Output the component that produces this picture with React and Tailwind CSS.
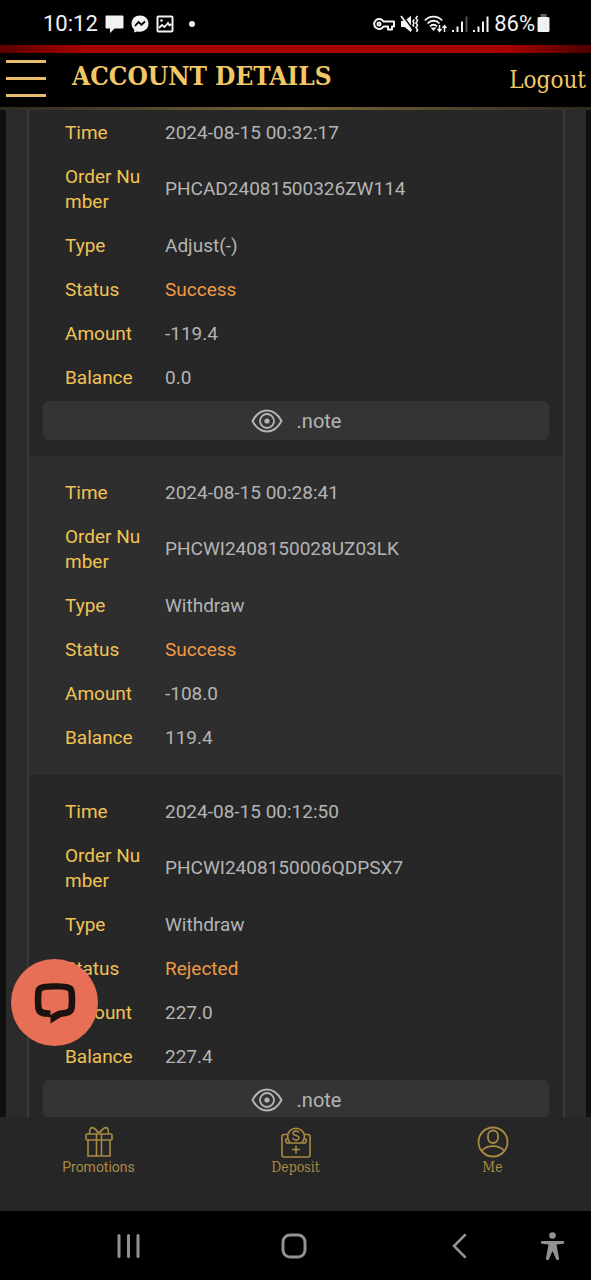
// src/App.jsx
import React from "react";

const records = [
  {
    time: "2024-08-15 00:32:17",
    orderNumber: "PHCAD24081500326ZW114",
    type: "Adjust(-)",
    status: "Success",
    amount: "-119.4",
    balance: "0.0",
    note: true,
  },
  {
    time: "2024-08-15 00:28:41",
    orderNumber: "PHCWI2408150028UZ03LK",
    type: "Withdraw",
    status: "Success",
    amount: "-108.0",
    balance: "119.4",
    note: false,
  },
  {
    time: "2024-08-15 00:12:50",
    orderNumber: "PHCWI2408150006QDPSX7",
    type: "Withdraw",
    status: "Rejected",
    amount: "227.0",
    balance: "227.4",
    note: true,
  },
];

function StatusBar() {
  return (
    <div className="flex h-[45px] shrink-0 items-center justify-between bg-black pr-[41px] pl-[43px] pt-[2px] text-[#f2f2f2]">
      <div className="flex items-center gap-[7px]">
        <span className="text-[22px] leading-6">10:12</span>
        <svg width="19" height="18" viewBox="0 0 19 18" fill="currentColor" aria-hidden="true">
          <path d="M1.500 0.500h16a1 1 0 0 1 1 1v11a1 1 0 0 1-1 1H9.500L5 18v-4.500H1.500a1 1 0 0 1-1-1v-11a1 1 0 0 1 1-1z" />
        </svg>
        <svg width="18" height="18" viewBox="0 0 18 18" aria-hidden="true">
          <path
            d="M9 .5C4.100.5.500 4 .5 8.600c0 2.500 1 4.600 2.700 6.100v2.800l2.700-1.100c1 .3 2 .4 3.100.4 4.900 0 8.500-3.500 8.500-8.200S13.900.5 9 .5z"
            fill="currentColor"
          />
          <path d="M4 11l3.500-4 3 2.700L14 6.500" fill="none" stroke="#000" strokeWidth="1.800" />
        </svg>
        <svg width="18" height="18" viewBox="0 0 18 18" aria-hidden="true">
          <rect x="1.500" y="1.500" width="15" height="15" rx="1" fill="none" stroke="currentColor" strokeWidth="2" />
          <path d="M3 13l3-3 2.500 2L12 8l1.500 2.500 2-1.500" fill="none" stroke="currentColor" strokeWidth="1.800" />
          <circle cx="5.500" cy="5.500" r="1.300" fill="currentColor" />
        </svg>
        <span className="ml-2 h-[6px] w-[6px] rounded-full bg-[#f2f2f2]" />
      </div>

      <div className="flex items-center gap-[5px]">
        <svg width="22" height="14" viewBox="0 0 22 14" fill="none" stroke="currentColor" strokeWidth="2" aria-hidden="true">
          <path d="M10.500 4.500A5 5 0 1 0 10.500 9.500H15V12.500H19V9.500H21V4.500z" strokeLinejoin="round" />
          <circle cx="6" cy="7" r="1.500" />
        </svg>
        <svg width="19" height="18" viewBox="0 0 19 18" aria-hidden="true">
          <path d="M1 6h3.500L11 .8v16.400L4.500 12H1z" fill="currentColor" />
          <path d="M2.500 .5l9 12" stroke="#000" strokeWidth="1.500" />
          <path d="M1 1l10.500 14.500" stroke="currentColor" strokeWidth="1.800" />
          <path
            d="M14 4.500l-1 1.800 1 1.800-1 1.800 1 1.800M17.500 1l-1.500 2.300 1.500 2.300-1.500 2.300 1.500 2.300-1.500 2.300 1.500 2.300-1 2"
            fill="none"
            stroke="currentColor"
            strokeWidth="1.600"
          />
        </svg>
        <svg width="23" height="18" viewBox="0 0 23 18" fill="none" stroke="currentColor" strokeWidth="1.800" aria-hidden="true">
          <path d="M.8 5.500C5.500.200 13.500.200 18.200 5.500M3.500 8.500c3.500-3.700 8.500-3.700 12 0M6 11.300c2-2.100 5-2.100 7 0" />
          <path d="M8.500 13.500h2l-1 1.200z" fill="currentColor" />
          <path d="M15.500 10v6M13.500 14l2 2.300 2-2.300M20.500 17v-6M18.500 13l2-2.300 2 2.300" strokeWidth="1.500" />
        </svg>
        <svg width="16" height="18" viewBox="0 0 16 18" fill="currentColor" aria-hidden="true">
          <path d="M0 15h2v2H0zM4.500 11.500h2V17h-2zM9 6.500h2V17H9z" />
          <path d="M13.500 1.500h2V17h-2z" opacity=".35" />
        </svg>
        <svg width="16" height="18" viewBox="0 0 16 18" fill="currentColor" aria-hidden="true">
          <path d="M0 15h2v2H0zM4.500 11.500h2V17h-2zM9 6.500h2V17H9zM13.500 1.500h2V17h-2z" />
        </svg>
        <div className="flex items-center gap-[2px]">
          <span className="text-[22px] leading-6">86%</span>
          <svg width="13" height="19" viewBox="0 0 13 19" fill="currentColor" aria-hidden="true">
            <path d="M3.500 0h6v4h-6z" opacity=".4" />
            <rect x=".5" y="3" width="12" height="15" rx="1.500" />
          </svg>
        </div>
      </div>
    </div>
  );
}

function Header() {
  return (
    <header className="shrink-0 bg-black font-['DejaVu_Serif_Condensed','DejaVu_Serif',serif]">
      <div className="h-2 bg-[linear-gradient(to_right,#5a0000,#a60000_14%,#a60000_86%,#4c0000)]" />
      <div className="flex h-[54px] items-center justify-between pr-[5px] pl-[6px]">
        <div className="flex items-center gap-[26px] pb-1">
          <button type="button" aria-label="Open menu" className="flex flex-col gap-[14px]">
            <span className="h-[3px] w-10 bg-[#e8bd6c]" />
            <span className="h-[3px] w-10 bg-[#e8bd6c]" />
            <span className="h-[3px] w-10 bg-[#e8bd6c]" />
          </button>
          <h1 className="pb-1 text-[26px] leading-8 font-bold text-[#f2c866]">ACCOUNT DETAILS</h1>
        </div>
        <a href="#logout" className="text-[24px] leading-8 text-[#f2c866]">
          Logout
        </a>
      </div>
      <div className="h-[3px] bg-linear-to-r from-[#2e2a20] via-[#7d6738] to-[#2e2a20]" />
    </header>
  );
}

function EyeIcon() {
  return (
    <svg width="32" height="24" viewBox="0 0 32 24" fill="none" stroke="currentColor" strokeWidth="2" aria-hidden="true">
      <path d="M1.500 12C5 5.500 10 1.500 16 1.500S27 5.500 30.500 12C27 18.500 22 22.500 16 22.500S5 18.500 1.500 12z" strokeLinejoin="round" />
      <circle cx="16" cy="12" r="7" strokeWidth="1.800" />
      <circle cx="16" cy="12" r="2.600" fill="currentColor" stroke="none" />
    </svg>
  );
}

function Row({ label, value, valueClass = "text-[#b4b4b4]" }) {
  return (
    <tr>
      <th scope="row" className="w-[100px] pt-[10px] pr-5 pb-[9px] text-left font-normal break-all text-[#f0c254]">
        {label}
      </th>
      <td className={valueClass}>{value}</td>
    </tr>
  );
}

function RecordCard({ record }) {
  return (
    <section className="bg-[#272727] px-[14px] pt-[14px] pb-4 first:pt-0 even:bg-[#2e2e2e]">
      <div className="px-[22px]">
        <table className="w-full table-fixed text-[19px] leading-[25px]">
          <tbody>
            <Row label="Time" value={record.time} />
            <Row label="Order Number" value={record.orderNumber} />
            <Row label="Type" value={record.type} />
            <Row label="Status" value={record.status} valueClass="text-[#f09a45]" />
            <Row label="Amount" value={record.amount} />
            <Row label="Balance" value={record.balance} />
          </tbody>
        </table>
      </div>
      {record.note && (
        <button
          type="button"
          className="mt-[2px] flex h-[39px] w-full items-center justify-center gap-[14px] rounded-md bg-[#343434] text-[20px] text-[#b4b4b4]"
        >
          <EyeIcon />
          .note
        </button>
      )}
    </section>
  );
}

function ChatButton() {
  return (
    <button
      type="button"
      aria-label="Open chat"
      className="absolute bottom-[71px] left-[11px] flex h-[87px] w-[87px] items-center justify-center rounded-full bg-[#e76f55] text-[#1b120f]"
    >
      <svg width="42" height="42" viewBox="0 0 42 42" aria-hidden="true">
        <path
          fill="currentColor"
          fillRule="evenodd"
          d="M9 2C16 .9 26 .9 33 2C38 2.800 40.500 5.500 40.900 10C41.400 15.500 41.400 20 40.900 25.500C40.500 30 38 33 33 34L27 35L16.500 41.500V35.300L9 34.400C4 33.500 1.500 30.500 1.100 25.500C.6 20 .6 15.500 1.100 10C1.500 5.500 4 2.800 9 2ZM10 8.200C8.500 8.500 7.800 9.300 7.600 11C7.200 15.500 7.200 20 7.600 24.500C7.800 26.500 8.600 27.300 10.500 27.700L16.500 28.400V33L24 28.800L31.500 27.700C33.400 27.300 34.200 26.500 34.400 24.500C34.800 20 34.800 15.500 34.400 11C34.200 9.300 33.500 8.500 32 8.200C26 7.400 16 7.400 10 8.200Z"
        />
      </svg>
    </button>
  );
}

function GiftIcon() {
  return (
    <svg width="28" height="32" viewBox="0 0 28 32" fill="none" stroke="currentColor" strokeWidth="1.600" aria-hidden="true">
      <rect x="1" y="8" width="26" height="6" rx="1" />
      <path d="M3 14v16h22V14M11.500 8v22M16.500 8v22" />
      <path d="M13 7C11 2.500 7 .5 5.500 2.500S5 6 4.500 8M15 7c2-4.500 6-6.500 7.500-4.500S23 6 23.500 8M11.500 6h5" />
    </svg>
  );
}

function DepositIcon() {
  return (
    <svg width="30" height="32" viewBox="0 0 30 32" fill="none" stroke="currentColor" strokeWidth="1.600" aria-hidden="true">
      <path d="M7 8.500H3a2 2 0 0 0-2 2V29a2 2 0 0 0 2 2h24a2 2 0 0 0 2-2V10.500a2 2 0 0 0-2-2h-4" />
      <path d="M9 16.500A8.400 8.400 0 1 1 21 16.500" />
      <path d="M6.500 12.500c-2.500.5-2.500 4.500.5 4.500h16c3 0 3-4 .5-4.500M15 19.500v8M11 23.500h8" />
      <path d="M18 6.800c-.5-1.300-1.600-1.800-3-1.800-1.800 0-3 .8-3 2.200 0 3 6 1.600 6 4.600 0 1.500-1.300 2.200-3 2.200s-2.800-.7-3.200-2M15 3.500v1.500M15 14v1.500" strokeWidth="1.400" />
    </svg>
  );
}

function MeIcon() {
  return (
    <svg width="32" height="32" viewBox="0 0 32 32" fill="none" stroke="currentColor" strokeWidth="1.800" aria-hidden="true">
      <circle cx="16" cy="16" r="14.500" />
      <rect x="11" y="4.500" width="10" height="12.500" rx="5" />
      <path d="M4.500 25C10 18.500 22 18.500 27.500 25" />
    </svg>
  );
}

function TabBar() {
  return (
    <nav className="grid h-[94px] shrink-0 grid-cols-3 bg-[#262626] pt-[9px] text-[14px] leading-[18px] text-[#a98a43]">
      <a href="#promotions" className="flex flex-col items-center">
        <GiftIcon />
        Promotions
      </a>
      <a href="#deposit" className="flex flex-col items-center font-['DejaVu_Serif_Condensed','DejaVu_Serif',serif]">
        <DepositIcon />
        Deposit
      </a>
      <a href="#me" className="flex flex-col items-center font-['DejaVu_Serif_Condensed','DejaVu_Serif',serif]">
        <MeIcon />
        Me
      </a>
    </nav>
  );
}

function SystemNav() {
  return (
    <div className="flex h-[69px] shrink-0 items-center gap-[140px] bg-black pr-[27px] pl-[117px] text-[#929292]">
      <button type="button" aria-label="Recent apps">
        <svg width="24" height="26" viewBox="0 0 24 26" stroke="currentColor" strokeWidth="3" strokeLinecap="round">
          <path d="M2 2.500v21M11.500 2.500v21M21 2.500v21" />
        </svg>
      </button>
      <button type="button" aria-label="Home">
        <svg width="26" height="26" viewBox="0 0 26 26" fill="none" stroke="currentColor" strokeWidth="3">
          <rect x="2" y="2" width="22" height="22" rx="7" />
        </svg>
      </button>
      <div className="ml-auto flex items-center gap-[74px]">
        <button type="button" aria-label="Back">
          <svg width="15" height="26" viewBox="0 0 15 26" fill="none" stroke="currentColor" strokeWidth="2.500" strokeLinecap="round">
            <path d="M13 2L2 13l11 11" />
          </svg>
        </button>
        <button type="button" aria-label="Accessibility">
          <svg width="23" height="28" viewBox="0 0 23 28" fill="currentColor">
            <circle cx="11.500" cy="3.500" r="3.300" />
            <path d="M1 9h21a1.400 1.400 0 0 1 0 2.800l-6.500.7L18 26a1.500 1.500 0 0 1-3 1l-3.500-8L8 27a1.500 1.500 0 0 1-3-1l2.500-13.500-6.500-.7A1.400 1.400 0 0 1 1 9z" />
          </svg>
        </button>
      </div>
    </div>
  );
}

export default function App() {
  return (
    <div className="flex h-screen flex-col bg-[#101010] font-[Roboto,sans-serif]">
      <StatusBar />
      <Header />
      <div className="relative flex min-h-0 flex-1 flex-col">
        <main className="min-h-0 flex-1 overflow-y-auto pr-[5px] pl-[6px] [scrollbar-width:none]">
          <div className="bg-[#2b2b2b] px-[21px]">
            <div className="border-x-2 border-[#3a3a3a]">
              {records.map((record) => (
                <RecordCard key={record.orderNumber} record={record} />
              ))}
            </div>
          </div>
        </main>
        <ChatButton />
      </div>
      <TabBar />
      <SystemNav />
    </div>
  );
}
